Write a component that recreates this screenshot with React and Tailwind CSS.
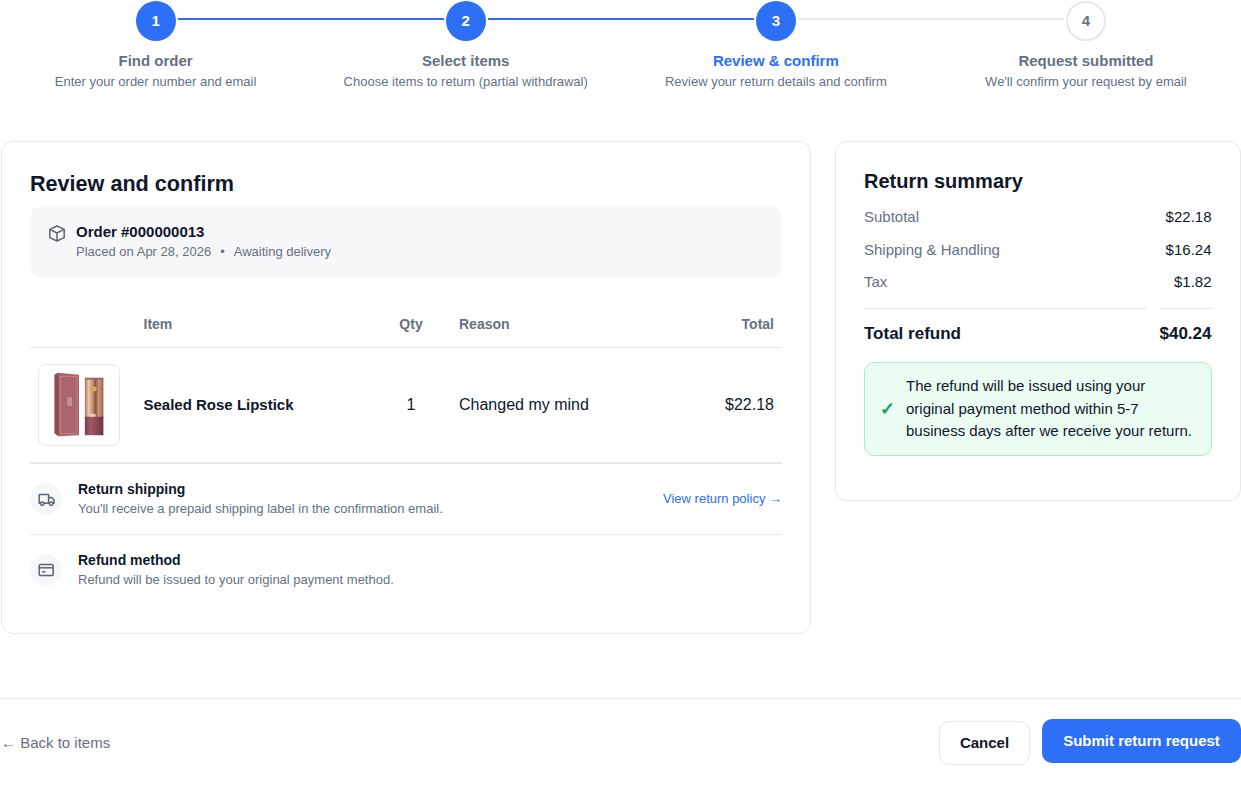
import React from 'react';

const steps = [
	{ n: 1, title: 'Find order', sub: 'Enter your order number and email', done: true, left: false, right: true },
	{ n: 2, title: 'Select items', sub: 'Choose items to return (partial withdrawal)', done: true, left: true, right: true },
	{ n: 3, title: 'Review & confirm', sub: 'Review your return details and confirm', done: true, active: true, left: true, right: false },
	{ n: 4, title: 'Request submitted', sub: "We'll confirm your request by email", done: false, left: false, right: false },
];

function PackageIcon() {
	return (
		<svg viewBox="0 0 18 17" className="w-[18px] h-[17px] -mt-[17px] shrink-0 text-[#5b6478]" fill="none" stroke="currentColor" strokeWidth="1.5" strokeLinejoin="round">
			<path d="M9 1 L16.2 4.4 V12.6 L9 16 L1.8 12.6 V4.4 Z" />
			<path d="M1.8 4.4 L9 8 L16.2 4.4 M9 8 V16" />
		</svg>
	);
}

function TruckIcon() {
	return (
		<svg viewBox="0 0 32 32" className="w-8 h-8 text-[#5b6478]" fill="none" stroke="currentColor" strokeWidth="1.5" strokeLinejoin="round">
			<path d="M10.4 20.2 H9.2 V11.5 H18.6 V20.2 H14" />
			<path d="M18.6 14.5 H21.8 L24 17 V20.2 H22.8" />
			<path d="M18.6 20.2 H19.4" />
			<circle cx="12.2" cy="20.8" r="1.7" />
			<circle cx="21.1" cy="20.8" r="1.7" />
		</svg>
	);
}

function CardIcon() {
	return (
		<svg viewBox="0 0 32 32" className="w-8 h-8 text-[#5b6478]" fill="none" stroke="currentColor" strokeWidth="1.5">
			<rect x="9.2" y="10.5" width="14" height="11" rx="1.8" />
			<path d="M9.2 13.8 H23.2" />
			<path d="M12 17.8 H15.5" />
		</svg>
	);
}

function Lipstick() {
	return (
		<svg viewBox="0 0 82 82" className="w-full h-full blur-[0.4px]">
			<defs>
				<linearGradient id="gold" x1="0" x2="1" y1="0" y2="0">
					<stop offset="0" stopColor="#a86f60" />
					<stop offset="0.2" stopColor="#eec6ad" />
					<stop offset="0.42" stopColor="#c98f70" />
					<stop offset="0.58" stopColor="#8a5445" />
					<stop offset="0.75" stopColor="#cf9677" />
					<stop offset="1" stopColor="#95604f" />
				</linearGradient>
				<linearGradient id="base" x1="0" x2="1" y1="0" y2="0">
					<stop offset="0" stopColor="#7c3a49" />
					<stop offset="0.3" stopColor="#a0596a" />
					<stop offset="1" stopColor="#75343f" />
				</linearGradient>
			</defs>
			<path d="M16 10 L20 8 L41 10 L41 72 L20 73 L16 70 Z" fill="#ab656c" />
			<path d="M16 10 L20 8 L20 73 L16 70 Z" fill="#8c4b53" />
			<rect x="22" y="12" width="17" height="58" fill="none" stroke="#cb9a9c" strokeWidth="0.5" />
			<rect x="29" y="33" width="5" height="9" fill="#d8b0aa" opacity="0.6" />
			<rect x="47" y="14" width="19" height="40" fill="url(#gold)" />
			<rect x="47" y="13" width="19" height="2" fill="#9b6a62" />
			<rect x="52" y="22" width="7" height="5" rx="2" fill="#d9a94f" />
			<rect x="47" y="53" width="19" height="19" fill="url(#base)" />
			<rect x="52" y="50" width="6" height="3" fill="#e8cdbb" />
		</svg>
	);
}

function App() {
	return (
		<div className="bg-white min-h-[807px] text-[#0f172a] font-['Liberation_Sans',Arial,sans-serif]">
			<div className="grid grid-cols-4 pl-[0.5px]">
				{steps.map((s) => (
					<div key={s.n} className="flex flex-col items-center pt-[1px]">
						<div className="flex items-center w-full gap-[2px]">
							<div className={`flex-1 h-[2px] mb-1 ${s.left ? 'bg-[#2d6ff7]' : s.n === 4 ? 'bg-[#e5e7eb]' : ''}`} />
							<div className={`w-10 h-10 rounded-full flex items-center justify-center text-[15px] font-bold ${s.done ? 'bg-[#2d6ff7] text-white' : 'border-2 border-[#e5e7eb] text-[#667085]'}`}>
								{s.n}
							</div>
							<div className={`flex-1 h-[2px] mb-1 ${s.right ? 'bg-[#2d6ff7]' : s.n === 3 ? 'bg-[#e5e7eb]' : ''}`} />
						</div>
						<div className={`mt-[10px] text-[15px] leading-[20px] font-bold ${s.active ? 'text-[#2d6ff7]' : 'text-[#667085]'}`}>{s.title}</div>
						<div className="mt-[1px] text-[13px] leading-[20px] text-[#667085]">{s.sub}</div>
					</div>
				))}
			</div>

			<div className="flex items-start gap-6 pl-[1px] mt-[49px]">
				<div className="w-[810px] h-[493px] border border-[#e5e7eb] rounded-xl px-7 pt-7">
					<h1 className="text-[21.6px] leading-[28px] font-bold">Review and confirm</h1>
					<div className="mt-2 h-[72px] bg-[#f6f7f9] rounded-xl flex items-center gap-[10px] px-[18px]">
						<PackageIcon />
						<div>
							<div className="text-[15px] leading-[20px] font-bold">Order #000000013</div>
							<div className="text-[13px] leading-[20px] text-[#667085]">
								Placed on Apr 28, 2026<span className="mx-[9px]">•</span>Awaiting delivery
							</div>
						</div>
					</div>

					<div className="mt-[23px] grid grid-cols-[105.5px_235.5px_80px_1fr_120px] items-center h-[47px] border-b border-[#e5e7eb] text-[14px] font-bold text-[#667085]">
						<div />
						<div className="px-2">Item</div>
						<div className="px-2 text-center">Qty</div>
						<div className="px-2">Reason</div>
						<div className="px-2 text-right">Total</div>
					</div>
					<div className="grid grid-cols-[105.5px_235.5px_80px_1fr_120px] items-center h-[116px] border-b-2 border-[#e5e7eb] text-[16px]">
						<div className="px-2">
							<div className="w-[82px] h-[82px] border border-[#e5e7eb] rounded-lg overflow-hidden">
								<Lipstick />
							</div>
						</div>
						<div className="px-2 text-[15px] font-bold">Sealed Rose Lipstick</div>
						<div className="px-2 text-center">1</div>
						<div className="px-2">Changed my mind</div>
						<div className="px-2 text-right">$22.18</div>
					</div>

					<div className="flex items-center gap-4 h-[71px] border-b border-[#e5e7eb]">
						<div className="w-8 h-8 rounded-full bg-[#f6f7f9]">
							<TruckIcon />
						</div>
						<div className="flex-1 -mt-[2px]">
							<div className="text-[14px] leading-[20px] font-bold">Return shipping</div>
							<div className="text-[13px] leading-[19px] text-[#667085]">You'll receive a prepaid shipping label in the confirmation email.</div>
						</div>
						<a href="#" className="text-[13px] text-[#2d6ff7]">View return policy →</a>
					</div>
					<div className="flex items-center gap-4 h-[69px]">
						<div className="w-8 h-8 mt-[1px] rounded-full bg-[#f6f7f9]">
							<CardIcon />
						</div>
						<div className="flex-1">
							<div className="text-[14px] leading-[20px] font-bold">Refund method</div>
							<div className="text-[13px] leading-[19px] text-[#667085]">Refund will be issued to your original payment method.</div>
						</div>
					</div>
				</div>

				<div className="w-[406px] h-[360px] border border-[#e5e7eb] rounded-xl pl-7 pr-7 pt-[25px]">
					<h2 className="text-[20px] leading-[28px] font-bold">Return summary</h2>
					<div className="mt-[11px] flex justify-between h-[33px] text-[15px] leading-[22px] pr-[0.5px]">
						<span className="text-[#667085]">Subtotal</span>
						<span>$22.18</span>
					</div>
					<div className="flex justify-between h-[32px] text-[15px] leading-[22px] pr-[0.5px]">
						<span className="text-[#667085]">Shipping &amp; Handling</span>
						<span>$16.24</span>
					</div>
					<div className="flex justify-between h-[37px] text-[15px] leading-[22px] pr-[0.5px]">
						<span className="text-[#667085]">Tax</span>
						<span>$1.82</span>
					</div>
					<div className="flex justify-between gap-[13px] h-[50px] text-[17px] font-bold pr-[0.5px]">
						<div className="flex-1 border-t border-[#e5e7eb] pt-[14px] leading-[22px]">Total refund</div>
						<div className="border-t border-[#e5e7eb] pt-[14px] leading-[22px]">$40.24</div>
					</div>
					<div className="mt-1 h-[94px] bg-[#ebfcf3] border border-[#a7f0c6] rounded-[10px] flex items-center gap-[11px] pl-[15px] text-[15px] leading-[22.5px]">
						<span className="text-[#16a362] text-[18px] font-bold">✓</span>
						<p className="w-[290px]">The refund will be issued using your original payment method within 5-7 business days after we receive your return.</p>
					</div>
				</div>
			</div>

			<div className="mt-[64px] border-t border-[#e5e7eb] flex items-start justify-between pl-[1px] pt-5">
				<a href="#" className="mt-[14px] text-[15px] leading-[20px] text-[#667085]">← Back to items</a>
				<div className="flex items-start gap-3">
					<button className="mt-[2px] w-[91px] h-[44px] bg-white border border-[#e5e7eb] rounded-[10px] text-[15px] font-bold">Cancel</button>
					<button className="w-[199px] h-[44px] bg-[#2d6ff7] text-white rounded-[10px] text-[15px] font-bold">Submit return request</button>
				</div>
			</div>
		</div>
	);
}

export default App;
